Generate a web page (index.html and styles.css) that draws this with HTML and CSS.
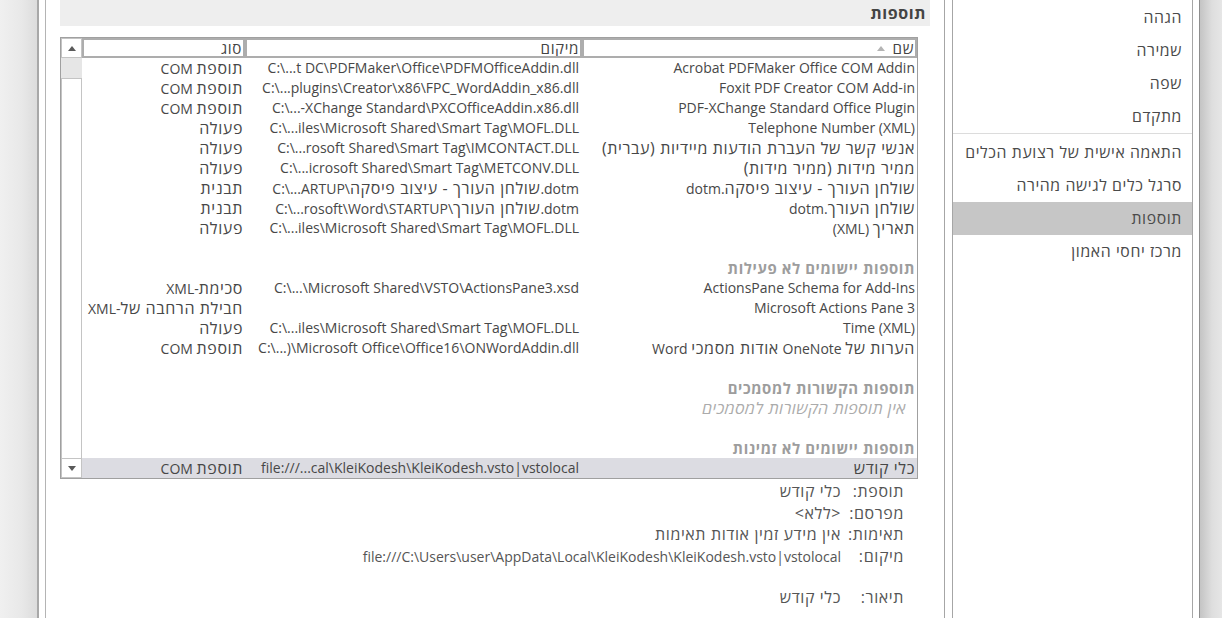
FILE: index.html
```html
<!DOCTYPE html>
<html lang="he" dir="rtl">
<head>
<meta charset="utf-8">
<title>אפשרויות Word - תוספות</title>
<link rel="stylesheet" href="styles.css">
</head>
<body>
<div class="screen">
  <div class="edge-right"></div>
  <div class="dialog">
    <div class="dialog-inner">
      <nav class="nav">
        <div class="nav-item">הגהה</div>
        <div class="nav-item">שמירה</div>
        <div class="nav-item">שפה</div>
        <div class="nav-item">מתקדם</div>
        <div class="nav-sep"></div>
        <div class="nav-item">התאמה אישית של רצועת הכלים</div>
        <div class="nav-item">סרגל כלים לגישה מהירה</div>
        <div class="nav-item selected">תוספות</div>
        <div class="nav-item">מרכז יחסי האמון</div>
      </nav>
      <div class="gap"></div>
      <main class="main">
        <div class="band">תוספות</div>
        <div class="listbox">
          <div class="list">
            <div class="head">
              <div class="hcell">שם<svg class="sort" width="8" height="5" viewBox="0 0 8 5"><polygon points="0,5 8,5 4,0" fill="#b4b4b4"/></svg></div>
              <div class="hcell">מיקום</div>
              <div class="hcell">סוג</div>
            </div>
            <div class="row"><div class="c">Acrobat PDFMaker Office COM Addin</div><div class="c loc">C:\...t DC\PDFMaker\Office\PDFMOfficeAddin.dll</div><div class="c"><span class="h">תוספת</span> COM</div></div>
            <div class="row"><div class="c">Foxit PDF Creator COM Add-in</div><div class="c loc">C:\...plugins\Creator\x86\FPC_WordAddin_x86.dll</div><div class="c"><span class="h">תוספת</span> COM</div></div>
            <div class="row"><div class="c">PDF-XChange Standard Office Plugin</div><div class="c loc">C:\...-XChange Standard\PXCOfficeAddin.x86.dll</div><div class="c"><span class="h">תוספת</span> COM</div></div>
            <div class="row"><div class="c"><span dir="ltr">Telephone Number (XML)</span></div><div class="c loc">C:\...iles\Microsoft Shared\Smart Tag\MOFL.DLL</div><div class="c h">פעולה</div></div>
            <div class="row"><div class="c h">אנשי קשר של העברת הודעות מיידיות (עברית)</div><div class="c loc">C:\...rosoft Shared\Smart Tag\IMCONTACT.DLL</div><div class="c h">פעולה</div></div>
            <div class="row"><div class="c h">ממיר מידות (ממיר מידות)</div><div class="c loc">C:\...icrosoft Shared\Smart Tag\METCONV.DLL</div><div class="c h">פעולה</div></div>
            <div class="row"><div class="c"><span class="h">שולחן העורך - עיצוב פיסקה</span>.dotm</div><div class="c loc">C:\...ARTUP\<span class="h">שולחן העורך - עיצוב פיסקה</span>.dotm</div><div class="c h">תבנית</div></div>
            <div class="row"><div class="c"><span class="h">שולחן העורך</span>.dotm</div><div class="c loc">C:\...rosoft\Word\STARTUP\<span class="h">שולחן העורך</span>.dotm</div><div class="c h">תבנית</div></div>
            <div class="row"><div class="c"><span class="h">תאריך</span> (XML)</div><div class="c loc">C:\...iles\Microsoft Shared\Smart Tag\MOFL.DLL</div><div class="c h">פעולה</div></div>
            <div class="row"></div>
            <div class="row"><div class="c section">תוספות יישומים לא פעילות</div></div>
            <div class="row"><div class="c">ActionsPane Schema for Add-Ins</div><div class="c loc">C:\...\Microsoft Shared\VSTO\ActionsPane3.xsd</div><div class="c"><span class="h">סכימת</span>-XML</div></div>
            <div class="row"><div class="c">Microsoft Actions Pane 3</div><div class="c loc"></div><div class="c"><span class="h">חבילת הרחבה של</span>-XML</div></div>
            <div class="row"><div class="c"><span dir="ltr">Time (XML)</span></div><div class="c loc">C:\...iles\Microsoft Shared\Smart Tag\MOFL.DLL</div><div class="c h">פעולה</div></div>
            <div class="row"><div class="c"><span class="h">הערות של</span> OneNote <span class="h">אודות מסמכי</span> Word</div><div class="c loc">C:\...)\Microsoft Office\Office16\ONWordAddin.dll</div><div class="c"><span class="h">תוספת</span> COM</div></div>
            <div class="row"></div>
            <div class="row"><div class="c section">תוספות הקשורות למסמכים</div></div>
            <div class="row"><div class="c empty">אין תוספות הקשורות למסמכים</div></div>
            <div class="row"></div>
            <div class="row"><div class="c section">תוספות יישומים לא זמינות</div></div>
            <div class="row selected"><div class="c h">כלי קודש</div><div class="c loc">file:///...cal\KleiKodesh\KleiKodesh.vsto|vstolocal</div><div class="c"><span class="h">תוספת</span> COM</div></div>
          </div>
          <div class="scrollbar">
            <div class="sb-btn"><svg width="8" height="5" viewBox="0 0 8 5"><polygon points="0,5 8,5 4,0" fill="#5a5a5a"/></svg></div>
            <div class="sb-thumb"></div>
            <div class="sb-track"></div>
            <div class="sb-btn down"><svg width="8" height="5" viewBox="0 0 8 5"><polygon points="0,0 8,0 4,5" fill="#5a5a5a"/></svg></div>
          </div>
        </div>
        <div class="details">
          <div class="drow"><div class="dlabel">תוספת:</div><div class="dval h">כלי קודש</div></div>
          <div class="drow"><div class="dlabel">מפרסם:</div><div class="dval h">&lt;ללא&gt;</div></div>
          <div class="drow"><div class="dlabel">תאימות:</div><div class="dval h">אין מידע זמין אודות תאימות</div></div>
          <div class="drow"><div class="dlabel">מיקום:</div><div class="dval"><span dir="ltr">file:///C:\Users\user\AppData\Local\KleiKodesh\KleiKodesh.vsto|vstolocal</span></div></div>
          <div class="dspacer"></div>
          <div class="drow"><div class="dlabel">תיאור:</div><div class="dval h">כלי קודש</div></div>
        </div>
      </main>
    </div>
  </div>
  <div class="edge-left"></div>
</div>
</body>
</html>
```

FILE: styles.css
```css
html, body {
  margin: 0;
  padding: 0;
}
body {
  width: 1222px;
  height: 618px;
  overflow: hidden;
  background: #ffffff;
  font-family: "Open Sans", "Liberation Sans", "DejaVu Sans", sans-serif;
  color: #444444;
}
.screen {
  display: flex;
  height: 618px;
}
.edge-right {
  flex: none;
  width: 23px;
  box-sizing: border-box;
  border-left: 1px solid #8e8e8e;
  background: linear-gradient(to right, #c4c4c4, #dedede 55%, #e6e6e6);
}
.edge-left {
  flex: none;
  width: 39px;
  box-sizing: border-box;
  border-right: 2px solid #a8a8a8;
  background: linear-gradient(to right, #f0f0f0, #e8e8e8 60%, #dcdcdc);
}
.dialog {
  flex: none;
  width: 1160px;
  box-sizing: border-box;
  padding: 0 6px;
  background: #ffffff;
}
.dialog-inner {
  display: flex;
  height: 100%;
  border-left: 1px solid #b4b4b4;
  border-right: 1px solid #a6a6a6;
}
.nav {
  flex: none;
  width: 240px;
  box-sizing: border-box;
  border-left: 1px solid #a6a6a6;
  padding-top: 1px;
  font-size: 15.8px;
  letter-spacing: 0.6px;
  color: #4a4a4a;
}
.nav-item {
  height: 33px;
  line-height: 33px;
  padding-right: 10px;
  white-space: nowrap;
}
.nav-item.selected {
  background: #c6c6c6;
}
.nav-sep {
  height: 3px;
  box-sizing: border-box;
  border-top: 1px solid #dcdcdc;
}
.gap {
  flex: none;
  width: 7px;
}
.main {
  flex: none;
  width: 899px;
  box-sizing: border-box;
  border-right: 1px solid #a6a6a6;
  padding: 0 14px;
}
.band {
  height: 26px;
  line-height: 26px;
  background: #eeeeee;
  font-weight: bold;
  font-size: 16px;
  letter-spacing: 0.6px;
  padding-right: 4px;
  color: #444444;
}
.listbox {
  display: flex;
  width: 858px;
  height: 442px;
  box-sizing: border-box;
  margin-top: 11px;
  margin-right: 12px;
  border: 1px solid #a0a0a0;
}
.list {
  flex: none;
  width: 835px;
}
.head {
  display: grid;
  grid-template-columns: 335px 337px 163px;
  height: 20px;
}
.hcell {
  box-sizing: border-box;
  border: 2px solid #adadad;
  background: #ffffff;
  font-size: 15.2px;
  letter-spacing: 0.6px;
  line-height: 16px;
  padding-right: 1px;
  color: #444444;
  white-space: nowrap;
  overflow: hidden;
}
.sort {
  margin-right: 8px;
  vertical-align: 3px;
}
.row {
  display: grid;
  grid-template-columns: 335px 337px 163px;
  height: 20px;
  line-height: 20px;
  font-size: 14px;
  color: #474747;
  white-space: nowrap;
}
.row.selected {
  background: #dcdce2;
}
.c {
  overflow: hidden;
  padding-right: 2px;
}
.h {
  font-size: 16px;
  letter-spacing: 0.6px;
}
.loc {
  direction: ltr;
  text-align: right;
  padding-right: 3px;
}
.section {
  grid-column: 1 / -1;
  font-weight: bold;
  font-size: 14.9px;
  letter-spacing: 0.6px;
  color: #9d9d9d;
}
.empty {
  grid-column: 1 / -1;
  font-style: italic;
  font-size: 16px;
  letter-spacing: 0.6px;
  color: #ababab;
  padding-right: 11px;
}
.scrollbar {
  flex: none;
  width: 21px;
  display: flex;
  flex-direction: column;
}
.sb-btn {
  height: 20px;
  box-sizing: border-box;
  border: 1px solid #c4c4c4;
  display: flex;
  align-items: center;
  justify-content: center;
}
.sb-thumb {
  height: 20px;
  background: #e6e6e6;
}
.sb-track {
  flex: 1;
  box-sizing: border-box;
  border: 1px solid #c4c4c4;
  border-bottom: none;
}
.details {
  margin-top: 2px;
  margin-right: 26px;
  font-size: 14px;
  color: #555555;
}
.drow {
  display: flex;
  height: 21.5px;
  line-height: 21.5px;
  white-space: nowrap;
}
.dlabel {
  flex: none;
  width: 63px;
  font-size: 16px;
  letter-spacing: 0.6px;
}
.dspacer {
  height: 20px;
}
```
